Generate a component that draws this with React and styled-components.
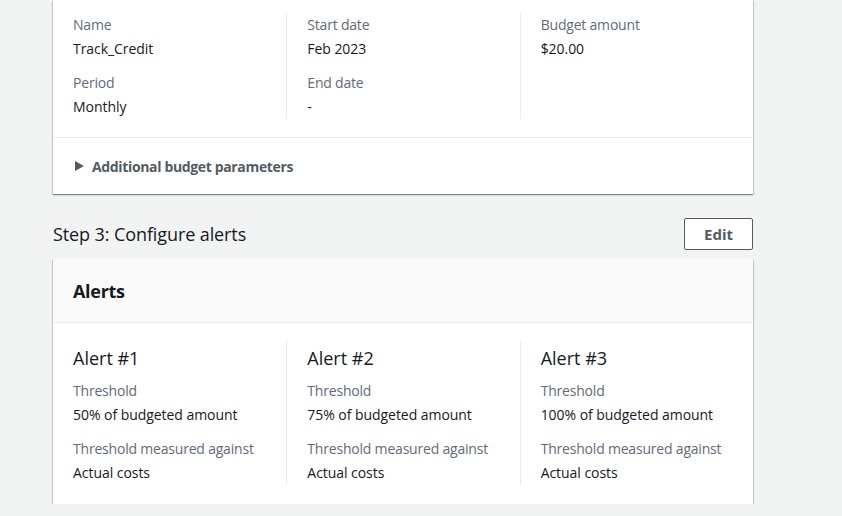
import React from "react";
import styled, { createGlobalStyle } from "styled-components";

const Global = createGlobalStyle`
  html, body { margin: 0; padding: 0; background: #f2f3f3; }
  body { font-family: "Open Sans", "Liberation Sans", sans-serif; color: #16191f; }
`;

const Page = styled.div`
  width: 700px;
  margin-left: 53px;
  display: flex;
  flex-direction: column;
`;

const Card = styled.section`
  background: #fff;
  box-shadow: 0 1px 1px 0 rgba(0, 28, 36, 0.3), 1px 1px 1px 0 rgba(0, 28, 36, 0.15),
    -1px 1px 1px 0 rgba(0, 28, 36, 0.15);
`;

const CardHeader = styled.div`
  background: #fafafa;
  height: 64px;
  box-sizing: border-box;
  padding: 0 20px;
  display: flex;
  align-items: center;
  border-bottom: 1px solid #eaeded;
  font-size: 18px;
  font-weight: 700;
  letter-spacing: -0.3px;
`;

const Columns = styled.div`
  display: grid;
  grid-template-columns: repeat(3, 1fr);
  padding: ${(p) => p.$pad};
`;

const Column = styled.div`
  display: flex;
  flex-direction: column;
  padding-left: 20px;
  border-left: ${(p) => (p.$first ? "none" : "1px solid #eaeded")};
`;

const Field = styled.div`
  display: flex;
  flex-direction: column;
  & + & { margin-top: 10px; }
`;

const Label = styled.div`
  font-size: 14px;
  line-height: 24px;
  color: #5f6b7a;
  letter-spacing: -0.2px;
`;

const Value = styled.div`
  font-size: 14px;
  line-height: 24px;
  color: #16191f;
  letter-spacing: -0.05px;
`;

const AlertTitle = styled.div`
  font-size: 18px;
  line-height: 36px;
  margin-bottom: 3px;
  color: #16191f;
`;

const Footer = styled.div`
  border-top: 1px solid #eaeded;
  height: 57px;
  box-sizing: border-box;
  padding: 0 22px;
  display: flex;
  align-items: center;
  gap: 8px;
  font-size: 14px;
  font-weight: 700;
  letter-spacing: -0.35px;
  color: #545b64;
`;

const StepHeader = styled.div`
  display: flex;
  align-items: center;
  justify-content: space-between;
  margin: 24px 0 9px;
`;

const StepTitle = styled.h2`
  margin: 0;
  font-size: 18px;
  font-weight: 400;
  letter-spacing: -0.1px;
  color: #16191f;
`;

const Button = styled.button`
  width: 69px;
  height: 32px;
  background: #fff;
  border: 1px solid #545b64;
  border-radius: 2px;
  font-family: inherit;
  font-size: 15px;
  font-weight: 700;
  color: #545b64;
`;

const Caret = () => (
  <svg width="9" height="10" viewBox="0 0 9 10">
    <polygon points="0,0 9,5 0,10" fill="#545b64" />
  </svg>
);

const alerts = [
  { n: 1, t: "50% of budgeted amount" },
  { n: 2, t: "75% of budgeted amount" },
  { n: 3, t: "100% of budgeted amount" },
];

export default function App() {
  return (
    <>
      <Global />
      <Page>
        <Card>
          <Columns $pad="13px 0 18px">
            <Column $first>
              <Field>
                <Label>Name</Label>
                <Value>Track_Credit</Value>
              </Field>
              <Field>
                <Label>Period</Label>
                <Value>Monthly</Value>
              </Field>
            </Column>
            <Column>
              <Field>
                <Label>Start date</Label>
                <Value>Feb 2023</Value>
              </Field>
              <Field>
                <Label>End date</Label>
                <Value>-</Value>
              </Field>
            </Column>
            <Column>
              <Field>
                <Label>Budget amount</Label>
                <Value>$20.00</Value>
              </Field>
            </Column>
          </Columns>
          <Footer>
            <Caret />
            <span>Additional budget parameters</span>
          </Footer>
        </Card>

        <StepHeader>
          <StepTitle>Step 3: Configure alerts</StepTitle>
          <Button>Edit</Button>
        </StepHeader>

        <Card>
          <CardHeader>Alerts</CardHeader>
          <Columns $pad="17px 0 19px">
            {alerts.map((a, i) => (
              <Column key={a.n} $first={i === 0}>
                <AlertTitle>Alert #{a.n}</AlertTitle>
                <Field>
                  <Label>Threshold</Label>
                  <Value>{a.t}</Value>
                </Field>
                <Field>
                  <Label>Threshold measured against</Label>
                  <Value>Actual costs</Value>
                </Field>
              </Column>
            ))}
          </Columns>
        </Card>
      </Page>
    </>
  );
}
